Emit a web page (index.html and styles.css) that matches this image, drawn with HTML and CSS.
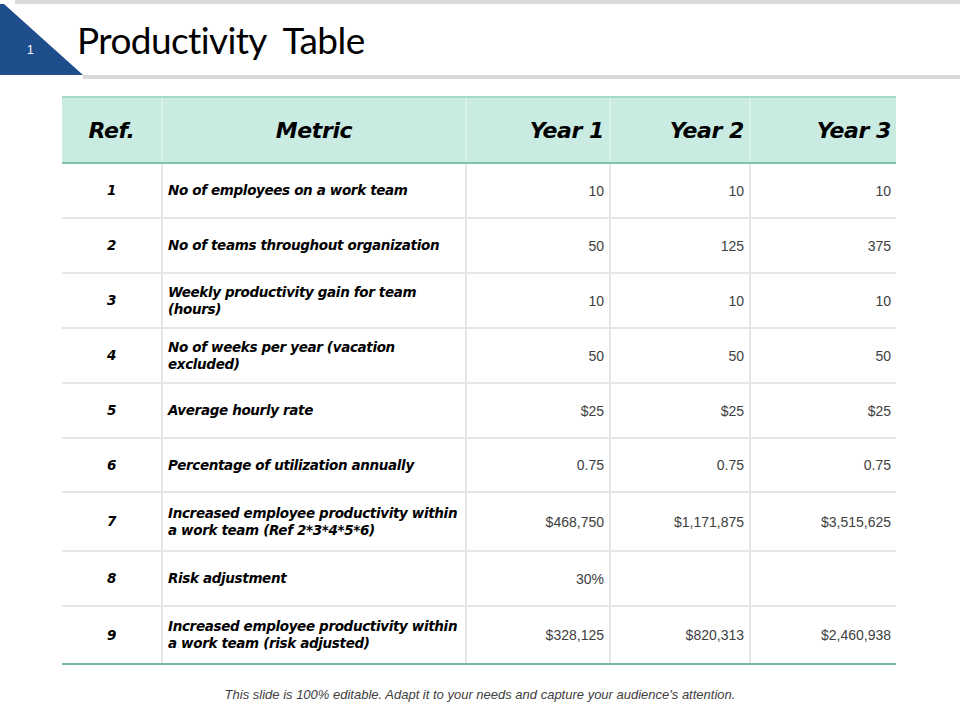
FILE: index.html
```html
<!DOCTYPE html>
<html>
<head>
<meta charset="utf-8">
<link rel="stylesheet" href="styles.css">
</head>
<body>
<div class="slide">
  <header class="head">
    <div class="topbar"></div>
    <div class="title-row">
      <div class="corner">
        <svg class="tri" width="83" height="71" viewBox="0 0 83 71"><polygon points="0,0 4,0 83,71 0,71" fill="#1f4e8d"/></svg>
        <span class="num">1</span>
      </div>
      <div class="title-area">
        <h1 class="title">Productivity&nbsp; Table</h1>
      </div>
    </div>
  </header>
  <main class="content">
    <table class="grid">
      <colgroup>
        <col class="c-ref"><col class="c-metric"><col class="c-y1"><col class="c-y2"><col class="c-y3">
      </colgroup>
      <thead>
        <tr><th class="ctr">Ref.</th><th class="ctr">Metric</th><th>Year 1</th><th>Year 2</th><th>Year 3</th></tr>
      </thead>
      <tbody>
        <tr><td class="ref">1</td><td class="metric">No of employees on a work team</td><td class="val">10</td><td class="val">10</td><td class="val">10</td></tr>
        <tr><td class="ref">2</td><td class="metric">No of teams throughout organization</td><td class="val">50</td><td class="val">125</td><td class="val">375</td></tr>
        <tr><td class="ref">3</td><td class="metric">Weekly productivity gain for team<br>(hours)</td><td class="val">10</td><td class="val">10</td><td class="val">10</td></tr>
        <tr><td class="ref">4</td><td class="metric">No of weeks per year (vacation<br>excluded)</td><td class="val">50</td><td class="val">50</td><td class="val">50</td></tr>
        <tr><td class="ref">5</td><td class="metric">Average hourly rate</td><td class="val">$25</td><td class="val">$25</td><td class="val">$25</td></tr>
        <tr class="short"><td class="ref">6</td><td class="metric">Percentage of utilization annually</td><td class="val">0.75</td><td class="val">0.75</td><td class="val">0.75</td></tr>
        <tr class="tall"><td class="ref">7</td><td class="metric">Increased employee productivity within<br>a work team (Ref 2*3*4*5*6)</td><td class="val">$468,750</td><td class="val">$1,171,875</td><td class="val">$3,515,625</td></tr>
        <tr><td class="ref">8</td><td class="metric">Risk adjustment</td><td class="val">30%</td><td class="val"></td><td class="val"></td></tr>
        <tr class="tall last"><td class="ref">9</td><td class="metric">Increased employee productivity within<br>a work team (risk adjusted)</td><td class="val">$328,125</td><td class="val">$820,313</td><td class="val">$2,460,938</td></tr>
      </tbody>
    </table>
    <p class="note">This slide is 100% editable. Adapt it to your needs and capture your audience's attention.</p>
  </main>
</div>
</body>
</html>
```
FILE: styles.css
```css
html, body {
  margin: 0;
  padding: 0;
  background: #ffffff;
}
.slide {
  width: 960px;
  height: 720px;
  overflow: hidden;
  display: flex;
  flex-direction: column;
}
.head {
  display: flex;
  flex-direction: column;
}
.topbar {
  height: 4px;
  margin-left: 15px;
  background: #d9d9d9;
}
.title-row {
  display: flex;
  align-items: stretch;
  height: 76px;
}
.corner {
  position: relative;
  width: 83px;
  flex: none;
}
.tri {
  display: block;
}
.num {
  position: absolute;
  left: 27px;
  top: 39px;
  font-family: "Liberation Sans", Arial, sans-serif;
  font-size: 12px;
  color: #ffffff;
}
.title-area {
  flex: 1;
  display: flex;
  align-items: flex-start;
  border-bottom: 4px solid #d9d9d9;
  height: 71px;
  box-sizing: content-box;
}
.title {
  margin: 16px 0 0 -6px;
  font-family: Lato, "Open Sans", sans-serif;
  font-weight: 400;
  font-size: 37px;
  line-height: 40px;
  color: #000000;
  letter-spacing: -0.6px;
}
.content {
  padding: 16px 0 0 62px;
  display: flex;
  flex-direction: column;
}
.grid {
  width: 834px;
  border-collapse: collapse;
  table-layout: fixed;
}
.c-ref { width: 100px; }
.c-metric { width: 304px; }
.c-y1 { width: 144px; }
.c-y2 { width: 140px; }
.c-y3 { width: 146px; }
.grid th {
  height: 64px;
  background: #c9ebe1;
  border-top: 2px solid #a3dac8;
  border-bottom: 2px solid #7ec4ad;
  border-left: 2px solid #d8f1e9;
  font-family: "DejaVu Sans", Verdana, sans-serif;
  font-style: italic;
  font-weight: 700;
  font-size: 22px;
  color: #000000;
  text-align: right;
  padding: 0 5px 0 0;
  letter-spacing: -0.4px;
}
.grid th:first-child { border-left: none; }
.grid th.ctr { text-align: center; padding: 0; }
.grid td {
  height: 53px;
  border-top: 2px solid #e6e6e6;
  border-left: 2px solid #e6e6e6;
  vertical-align: middle;
  padding: 0;
}
.grid tbody tr:first-child td { border-top: none; }
.grid td:first-child { border-left: none; }
.grid tr.short td { height: 52px; }
.grid tr.tall td { height: 57px; }
.grid tr.last td { height: 56px; border-bottom: 2px solid #77b8a2; }
.ref, .metric {
  font-family: "DejaVu Sans", Verdana, sans-serif;
  font-style: italic;
  font-weight: 700;
  font-size: 13.5px;
  line-height: 17px;
  color: #000000;
  letter-spacing: -0.35px;
}
.ref { text-align: center; }
.metric { padding-left: 5px !important; }
.val {
  font-family: "Liberation Sans", Arial, sans-serif;
  font-size: 14px;
  color: #404040;
  text-align: right;
  padding-right: 5px !important;
}
.note {
  margin: 22px 0 0 -62px;
  width: 960px;
  text-align: center;
  font-family: "Liberation Sans", Arial, sans-serif;
  font-style: italic;
  font-size: 13px;
  color: #404040;
}
```
